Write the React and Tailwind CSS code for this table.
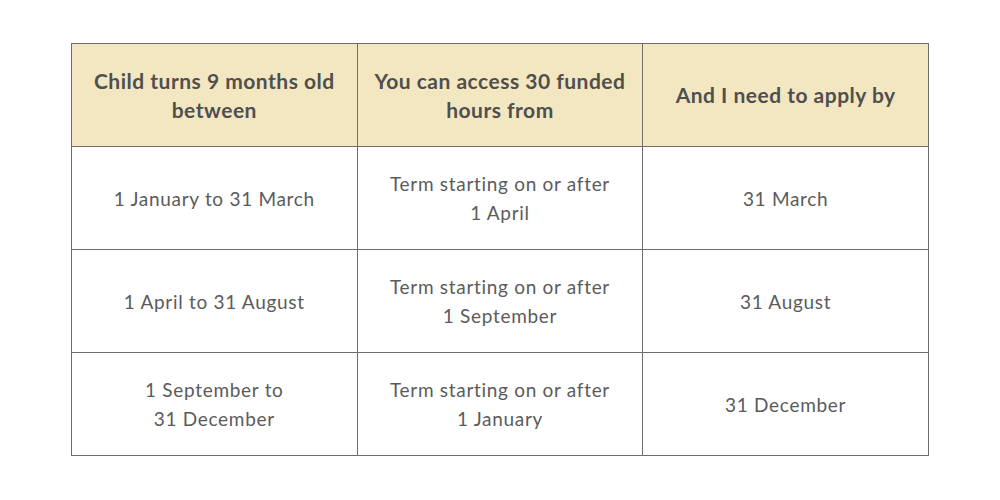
const rows = [
  ['1 January to 31 March', ['Term starting on or after', '1 April'], '31 March'],
  ['1 April to 31 August', ['Term starting on or after', '1 September'], '31 August'],
  [['1 September to', '31 December'], ['Term starting on or after', '1 January'], '31 December'],
];

const headers = [
  ['Child turns 9 months old', 'between'],
  ['You can access 30 funded', 'hours from'],
  ['And I need to apply by'],
];

const lines = (v) => (Array.isArray(v) ? v : [v]).map((l, i) => <div key={i}>{l}</div>);

const cellCls = 'border border-[#6e6e6e] h-[103px] px-2 text-center align-middle leading-[29px]';

export default function App() {
  return (
    <div className="w-[1000px] h-[500px] bg-white pt-[43px] pl-[71px]" style={{ fontFamily: 'Lato, "Open Sans", sans-serif' }}>
      <table className="w-[858px] table-fixed border-collapse">
        <thead>
          <tr className="bg-[#f3e7c1]">
            {headers.map((h, i) => (
              <th key={i} className={`${cellCls} text-[21px] tracking-[0.5px] font-bold text-[#4f4f4f] pb-[1px]`}>{lines(h)}</th>
            ))}
          </tr>
        </thead>
        <tbody>
          {rows.map((r, i) => (
            <tr key={i}>
              {r.map((c, j) => (
                <td key={j} className={`${cellCls} text-[19px] tracking-[0.7px] text-[#5b5b5b]`}>{lines(c)}</td>
              ))}
            </tr>
          ))}
        </tbody>
      </table>
    </div>
  );
}
